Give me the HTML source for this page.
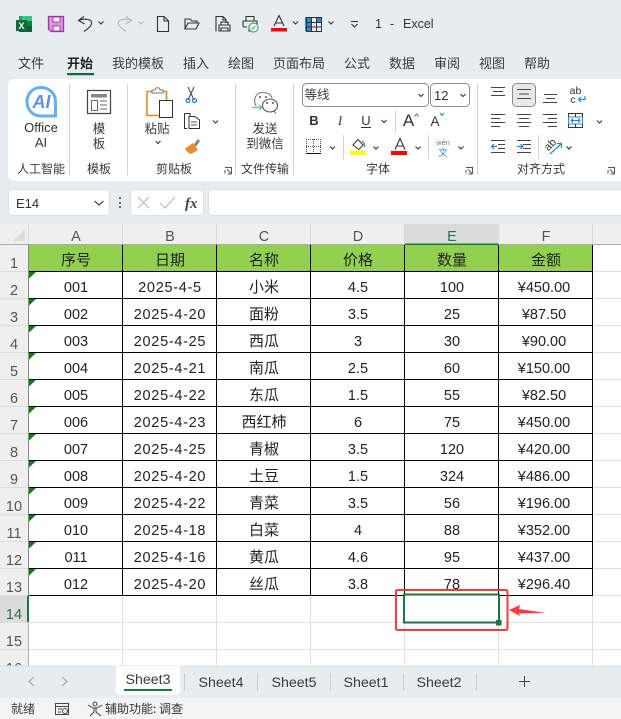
<!DOCTYPE html>
<html lang="zh"><head><meta charset="utf-8"><title>1 - Excel</title>
<style>
html,body{margin:0;padding:0;width:621px;height:719px;overflow:hidden;background:#fff}
svg{display:block;font-family:"Liberation Sans","Noto Sans CJK SC",sans-serif}
.c{font-size:14.5px;fill:#222;text-anchor:middle}
.d{font-size:14.5px;fill:#222;text-anchor:middle;letter-spacing:.7px}
.m{font-size:14.5px;fill:#222;text-anchor:middle}
.z{font-size:15px;fill:#222;text-anchor:middle;font-family:"Noto Sans CJK SC",sans-serif}
.h{font-size:14.5px;fill:#555;text-anchor:middle}
.t{font-size:13px;fill:#3a3a3a;text-anchor:middle;font-family:"Noto Sans CJK SC",sans-serif}
.l{font-size:12px;fill:#3a3a3a;text-anchor:middle;font-family:"Noto Sans CJK SC",sans-serif}
.s{font-size:14.200px;fill:#3a3a3a;text-anchor:middle}
.k{fill:none;stroke:#333;stroke-width:1.1}
.b{fill:none;stroke:#333;stroke-width:1}
</style></head><body>
<svg width="621" height="719" viewBox="0 0 621 719" xmlns="http://www.w3.org/2000/svg">
<rect width="621" height="224" fill="#e6ecef"/>
<!-- quick access -->
<rect x="19" y="16" width="13" height="16" fill="#21a366"/><rect x="22" y="16" width="10" height="5" fill="#33c481"/><rect x="25" y="21" width="7" height="5" fill="#107c41"/><rect x="19" y="26" width="13" height="6" fill="#185c37"/>
<rect x="16" y="20" width="11" height="11" fill="#0e6b3a"/><text x="21.500" y="29" font-size="9" font-weight="bold" fill="#fff" text-anchor="middle">X</text>
<path d="M48.500 16.500H63.500V31.500H51L48.500 29Z" fill="#d89ad8" stroke="#a333a3" stroke-width="1.300"/><rect x="53" y="17" width="7" height="5" fill="#fff" stroke="#a333a3"/><rect x="53" y="26" width="7" height="5" fill="#fff" stroke="#a333a3"/>
<path class="k" d="M84 16.500L78.500 20.500L84.500 24M78.500 20.500C83 18.500 90 18.500 91.500 22C92.500 25.500 88 28.500 84 31.500"/>
<path class="k" d="M98.500 21.500L101 24L103.500 21.500"/>
<path d="M126 16.500L131.500 20.500L125.500 24M131.500 20.500C127 18.500 120 18.500 118.500 22C117.500 25.500 122 28.500 126 31.500" fill="none" stroke="#b5b8ba" stroke-width="1.100"/>
<path d="M138.500 21.500L141 24L143.500 21.500" fill="none" stroke="#b5b8ba" stroke-width="1.100"/>
<path class="k" d="M157.500 16.500H164L168.500 21V31.500H157.500ZM164 16.500V21H168.500"/>
<path class="k" d="M185 29V19H190L192 21H197V23M185 29L188 23H199L196 29Z"/>
<path class="k" d="M216 31.500V16.500H223L226 19.500V23M223 16.500V20H226M219 31H230V25H219ZM221 25V22H228V25M221 28H228V31H221Z"/>
<path class="k" d="M246 21V16.500H254V21M243 27V21H257V24M247 27H243M249 26V31H251"/>
<circle cx="253.500" cy="27.500" r="4.500" fill="#fff" stroke="#3fae6a" stroke-width="1.200"/><path d="M251.500 27.500L253 29L255.500 26" fill="none" stroke="#3fae6a"/>
<path class="k" d="M274 26L279 15.500L284 26M275.500 23H282.500"/><rect x="271" y="28" width="16" height="3.500" fill="#f00"/>
<path class="k" d="M293 21.500L295.500 24L298 21.500"/>
<rect x="305" y="17" width="6" height="14" fill="#2b88d8"/><rect x="316" y="17" width="5" height="5" fill="#2b88d8"/>
<path d="M306.500 17.500H321.500V31.500H306.500ZM311.500 17.500V31.500M316.500 17.500V31.500M306.500 22.500H321.500M306.500 27H321.500" fill="none" stroke="#333"/>
<path class="k" d="M328.500 21.500L331 24L333.500 21.500"/>
<path class="k" d="M351 21.500H358M351.500 24L354.500 27L357.500 24"/>
<text x="375" y="28" font-size="12.500" fill="#333">1</text><text x="390" y="28" font-size="12.500" fill="#333">-</text><text x="403" y="28" font-size="12.500" fill="#333">Excel</text>
<!-- tabs -->
<text class="t" x="31" y="68">文件</text><text class="t" x="80" y="68" font-weight="bold" style="fill:#222">开始</text><text class="t" x="138" y="68">我的模板</text><text class="t" x="196" y="68">插入</text><text class="t" x="241" y="68">绘图</text><text class="t" x="299" y="68">页面布局</text><text class="t" x="357" y="68">公式</text><text class="t" x="402" y="68">数据</text><text class="t" x="447" y="68">审阅</text><text class="t" x="492" y="68">视图</text><text class="t" x="537" y="68">帮助</text>
<rect x="67" y="73" width="27" height="2.200" fill="#0f6b3c"/>
<!-- ribbon -->
<path d="M16 79H621V181H16Q8 181 8 173V87Q8 79 16 79Z" fill="#fff"/>
<path d="M69.500 84V175M127.500 84V175M235.500 84V175M293.500 84V175M477.500 84V175" stroke="#d4d4d4"/>
<!-- AI -->
<path d="M41 87.500C33 87.500 27 93.500 27 101.500C27 110 33 116 41 116H55.500V101.500C55.500 93.500 49 87.500 41 87.500Z" fill="#fff" stroke="#64b0f8" stroke-width="3"/>
<text x="41.500" y="108" font-size="18" font-weight="bold" font-style="italic" fill="#5f8fe8" text-anchor="middle">AI</text>
<text x="41" y="132" font-size="13" fill="#333" text-anchor="middle">Office</text><text x="41" y="147" font-size="13" fill="#333" text-anchor="middle">AI</text>
<text class="l" x="41" y="173">人工智能</text>
<!-- template -->
<rect x="87.500" y="90.500" width="23" height="23" fill="#fff" stroke="#444" stroke-width="1.200"/><rect x="91" y="94" width="16" height="3.500" fill="#888"/><rect x="91.500" y="100.500" width="6" height="10" fill="none" stroke="#666"/><path d="M100 101H107M100 105H107M100 109H107" stroke="#666"/>
<text class="l" x="99" y="133" style="font-size:12.500px">模</text><text class="l" x="99" y="148" style="font-size:12.500px">板</text><text class="l" x="99" y="173">模板</text>
<!-- clipboard -->
<path d="M147 91.500H166.500V115.500H147Z" fill="#fff" stroke="#e08a2e" stroke-width="1.600"/><path d="M152 93V90H155C155 87 160 87 160 90H163V93Z" fill="#fff" stroke="#777"/><rect x="159.500" y="100.500" width="13" height="17" fill="#fff" stroke="#333"/>
<text class="l" x="157" y="133" style="font-size:12.500px">粘贴</text><path class="k" d="M155.500 141L158 143.500L160.500 141"/>
<path d="M188 87L194 100M194 87L188 100" stroke="#444" fill="none"/><circle cx="188" cy="100.500" r="2" fill="none" stroke="#1f7fd0" stroke-width="1.200"/><circle cx="194.500" cy="100.500" r="2" fill="none" stroke="#1f7fd0" stroke-width="1.200"/>
<path class="b" d="M187 128.500H184.500V113.500H190V116.500M189 116.500H195L199.500 120V128.500H189Z"/><path d="M191 122H197M191 125H197" stroke="#555"/>
<path class="k" d="M213 120.500L215.500 123L218 120.500"/>
<path d="M186 148L193 143L198 150L191 154C188 153 186 151 185 148Z" fill="#ee8a2a"/><path d="M194 144L198 139L200 141L196 147Z" fill="#888"/>
<text class="l" x="174" y="173">剪贴板</text>
<path d="M225 167.500H231.500V174M225 173.500V170M231 174H227.500M227 169.500L231 173.500" fill="none" stroke="#555"/>
<!-- wechat -->
<path d="M256 106C253 100 255 92.500 263 92.500C268 92.500 271 95 272 98" fill="none" stroke="#777" stroke-width="1.100"/>
<ellipse cx="270" cy="105.500" rx="7.500" ry="6.500" fill="#fff" stroke="#555" stroke-width="1.100"/><path d="M274 111L276 113.500" stroke="#555"/>
<circle cx="260" cy="97" r="1" fill="#555"/><circle cx="266" cy="97" r="1" fill="#555"/><circle cx="267" cy="103" r="1" fill="#555"/><circle cx="273" cy="103" r="1" fill="#555"/>
<path d="M252 107.500H261.500M259 105L262 107.500L259 110" fill="none" stroke="#6fc08a" stroke-width="1.200"/>
<text class="l" x="265" y="133" style="font-size:12.500px">发送</text><text class="l" x="265" y="148" style="font-size:12.500px">到微信</text><text class="l" x="265" y="173">文件传输</text>
<!-- font -->
<rect x="302.500" y="83.500" width="126" height="23" rx="4" fill="#fff" stroke="#8a8a8a"/><text class="l" x="317" y="99" style="font-size:12.500px">等线</text><path class="k" d="M418.500 94L421 96.500L423.500 94"/>
<rect x="430.500" y="83.500" width="39" height="23" rx="4" fill="#fff" stroke="#8a8a8a"/><text x="434" y="100" font-size="13" fill="#333">12</text><path class="k" d="M460.500 94L463 96.500L465.500 94"/>
<text x="314" y="125" font-size="13" font-weight="bold" fill="#333" text-anchor="middle">B</text><text x="340" y="125" font-size="13" font-style="italic" fill="#333" text-anchor="middle" font-family="Liberation Serif">I</text><text x="366" y="125" font-size="13" fill="#333" text-anchor="middle">U</text><path d="M361 127.500H371" stroke="#333"/>
<path class="k" d="M381.500 120L384 122.500L386.500 120"/><path d="M395.500 110V133" stroke="#d4d4d4"/>
<text x="408.500" y="126" font-size="17" fill="#333" text-anchor="middle">A</text><path d="M414.500 116.500L416.500 114L418.500 116.500" fill="none" stroke="#2b88d8" stroke-width="1.100"/>
<text x="435" y="126" font-size="13.500" fill="#333" text-anchor="middle">A</text><path d="M440 113L442 115.500L444 113" fill="none" stroke="#2b88d8" stroke-width="1.100"/>
<path d="M306 139.500H321M306 146.500H321M306.500 139V153M313.500 139V153M320.500 139V153" stroke="#555" stroke-dasharray="1 1"/><path d="M306 153.500H321" stroke="#111"/>
<path class="k" d="M330 146.500L332.500 149L335 146.500"/><path d="M343.500 135V159" stroke="#d4d4d4"/>
<path class="b" d="M353 145L358 139.500L363 145L359 149.500Z"/><path d="M362 141Q365 143 364.500 147" stroke="#2b88d8" fill="none" stroke-width="1.300"/><rect x="350" y="151" width="16" height="4" fill="#ff0"/>
<path class="k" d="M373.500 146.500L376 149L378.500 146.500"/>
<path class="k" d="M395 149.500L400 138.500L405 149.500M396.500 146H403.500"/><rect x="391" y="151" width="16" height="4" fill="#f00"/>
<path class="k" d="M415.500 146.500L418 149L420.500 146.500"/><path d="M428.500 135V159" stroke="#d4d4d4"/>
<text x="443" y="145" font-size="7.500" fill="#777" text-anchor="middle">wén</text><text x="443" y="156" font-size="9.500" fill="#2b88d8" text-anchor="middle" font-family="Noto Sans CJK SC">文</text>
<path class="k" d="M458.500 146.500L461 149L463.500 146.500"/>
<text class="l" x="378" y="173">字体</text>
<path d="M466 167.500H472.500V174M466 173.500V170M472 174H468.500M468 169.500L472 173.500" fill="none" stroke="#555"/>
<!-- alignment -->
<rect x="512.500" y="83.500" width="23" height="23" rx="4" fill="#e8e8e8" stroke="#8a8a8a"/>
<path d="M491 87.500H505M493 91.500H503M491 95.500H505" stroke="#444"/>
<path d="M517 89.500H531M519 94H529M517 98.500H531" stroke="#444"/>
<path d="M544 94.500H557M546 98.500H555M543 102.500H557" stroke="#444"/>
<text x="575.500" y="94" font-size="10.500" fill="#333" text-anchor="middle">ab</text><text x="573" y="103" font-size="10.500" fill="#333" text-anchor="middle">c</text><path d="M585 96V99.500H578.500M581 97L578.500 99.500L581 102" fill="none" stroke="#2b88d8" stroke-width="1.200"/>
<path d="M491 114.500H505M491 118.500H500M491 122.500H505M491 126.500H500" stroke="#444"/>
<path d="M517 114.500H531M519 118.500H529M517 122.500H531M519 126.500H529" stroke="#444"/>
<path d="M543 114.500H557M548 118.500H557M543 122.500H557M548 126.500H557" stroke="#444"/>
<rect x="568.500" y="113.500" width="14" height="14" fill="#fff" stroke="#333"/><rect x="568.500" y="117" width="14" height="7" fill="#fff" stroke="#2b88d8"/><path d="M575.500 113.500V117M575.500 124V127.500" stroke="#333"/><path d="M571 120.500H580M573 118.500L571 120.500L573 122.500M578 118.500L580 120.500L578 122.500" fill="none" stroke="#1f7fd0" stroke-width="1.100"/>
<path class="k" d="M597 120.500L599.500 123L602 120.500"/>
<path d="M491 140.500H505M498 144.500H505M498 148.500H505M491 152.500H505" stroke="#444"/><path d="M497 146.500H491.500M494 144L491.500 146.500L494 149" fill="none" stroke="#1f7fd0" stroke-width="1.200"/>
<path d="M517 140.500H531M523 144.500H531M523 148.500H531M517 152.500H531" stroke="#444"/><path d="M517 146.500H523M520.500 144L523 146.500L520.500 149" fill="none" stroke="#1f7fd0" stroke-width="1.200"/>
<path d="M538.500 135V159" stroke="#d4d4d4"/>
<text x="550.500" y="148" font-size="11" fill="#333" text-anchor="middle" transform="rotate(-45 550.500 145)">ab</text><path d="M550 154L561 144M557 143.500H561.500V148" fill="none" stroke="#2b88d8" stroke-width="1.200"/>
<path class="k" d="M566.500 146.500L569 149L571.500 146.500"/>
<text class="l" x="541" y="173">对齐方式</text>
<path d="M608 167.500H614.500V174M608 173.500V170M614 174H610.500M610 169.500L614 173.500" fill="none" stroke="#555"/>
<!-- formula bar -->
<rect x="8.500" y="189.500" width="101" height="26" rx="4" fill="#fff" stroke="#dde1e3"/><text x="16" y="208" font-size="13" fill="#333">E14</text><path class="k" d="M94.500 201L99 205L103.500 201"/>
<circle cx="120" cy="198" r="1" fill="#444"/><circle cx="120" cy="203" r="1" fill="#444"/><circle cx="120" cy="207" r="1" fill="#444"/>
<rect x="130.500" y="189.500" width="73" height="26" rx="4" fill="#fff" stroke="#dde1e3"/>
<path d="M138 197L149 208M149 197L138 208" stroke="#bcbcbc" stroke-width="1.200"/><path d="M160 203L165 208L175 197" fill="none" stroke="#bcbcbc" stroke-width="1.200"/>
<text x="185" y="208" font-size="15" font-style="italic" font-weight="bold" fill="#444" font-family="Liberation Serif">fx</text>
<rect x="208.500" y="189.500" width="420" height="26" rx="4" fill="#fff" stroke="#dde1e3"/>
<!-- headers -->
<rect y="224" width="621" height="20" fill="#efefef"/><rect y="224" width="28" height="442" fill="#efefef"/>
<path d="M25 229V241H13Z" fill="#dcdcdc"/>
<rect x="405" y="224" width="93" height="20" fill="#dcdcdc"/>
<path d="M28.500 224V244M122.500 224V244M216.500 224V244M310.500 224V244M404.500 224V244M498.500 224V244M592.500 224V244" stroke="#d8d8d8"/>
<rect y="244" width="621" height="1" fill="#ababab"/><rect x="405" y="243.500" width="93" height="2" fill="#217346"/>
<path d="M0 271.500H28M0 298.500H28M0 325.500H28M0 352.500H28M0 379.500H28M0 406.500H28M0 433.500H28M0 460.500H28M0 487.500H28M0 514.500H28M0 541.500H28M0 568.500H28M0 595.500H28M0 622.500H28M0 649.500H28" stroke="#dcdcdc"/>
<rect y="596" width="28" height="26" fill="#dcdcdc"/>
<text class="h" x="76" y="241">A</text><text class="h" x="170" y="241">B</text><text class="h" x="264" y="241">C</text><text class="h" x="358" y="241">D</text><text class="h" x="452" y="241" style="fill:#217346">E</text><text class="h" x="546" y="241">F</text>
<text class="h" x="14" y="268">1</text><text class="h" x="14" y="295">2</text><text class="h" x="14" y="322">3</text><text class="h" x="14" y="349">4</text><text class="h" x="14" y="376">5</text><text class="h" x="14" y="403">6</text><text class="h" x="14" y="430">7</text><text class="h" x="14" y="457">8</text><text class="h" x="14" y="484">9</text><text class="h" x="14" y="511">10</text><text class="h" x="14" y="538">11</text><text class="h" x="14" y="565">12</text><text class="h" x="14" y="592">13</text><text class="h" x="14" y="619" style="fill:#217346">14</text><text class="h" x="14" y="646">15</text><text class="h" x="14" y="673">16</text>
<!-- grid -->
<path d="M592 271.500H621M592 298.500H621M592 325.500H621M592 352.500H621M592 379.500H621M592 406.500H621M592 433.500H621M592 460.500H621M592 487.500H621M592 514.500H621M592 541.500H621M592 568.500H621M592 595.500H621M29 622.500H621M29 649.500H621M122.500 596V666M216.500 596V666M310.500 596V666M404.500 596V666M498.500 596V666M592.500 596V666" stroke="#e0e0e0"/>
<rect x="29" y="245" width="564" height="26" fill="#92d050"/>
<path d="M28.500 245V666" stroke="#ababab"/>
<path d="M29 271.500H593M29 298.500H593M29 325.500H593M29 352.500H593M29 379.500H593M29 406.500H593M29 433.500H593M29 460.500H593M29 487.500H593M29 514.500H593M29 541.500H593M29 568.500H593M29 595.500H593M122.500 245V596M216.500 245V596M310.500 245V596M404.500 245V596M498.500 245V596M592.500 245V596" stroke="#000"/>
<path d="M28.500 245V596" stroke="#888"/>
<rect x="27" y="596" width="2" height="26" fill="#217346"/>
<!-- triangles -->
<path fill="#107c10" d="M29 272h7l-7 6.500zM29 299h7l-7 6.500zM29 326h7l-7 6.500zM29 353h7l-7 6.500zM29 380h7l-7 6.500zM29 407h7l-7 6.500zM29 434h7l-7 6.500zM29 461h7l-7 6.500zM29 488h7l-7 6.500zM29 515h7l-7 6.500zM29 542h7l-7 6.500zM29 569h7l-7 6.500z"/>
<!-- data -->
<text class="z" x="76" y="265">序号</text><text class="z" x="170" y="265">日期</text><text class="z" x="264" y="265">名称</text><text class="z" x="358" y="265">价格</text><text class="z" x="452" y="265">数量</text><text class="z" x="546" y="265">金额</text>
<text class="c" x="76" y="292">001</text><text class="d" x="170" y="292">2025-4-5</text><text class="z" x="264" y="292">小米</text><text class="c" x="358" y="292">4.5</text><text class="c" x="452" y="292">100</text><text class="m" x="544" y="292">¥450.00</text>
<text class="c" x="76" y="319">002</text><text class="d" x="170" y="319">2025-4-20</text><text class="z" x="264" y="319">面粉</text><text class="c" x="358" y="319">3.5</text><text class="c" x="452" y="319">25</text><text class="m" x="544" y="319">¥87.50</text>
<text class="c" x="76" y="346">003</text><text class="d" x="170" y="346">2025-4-25</text><text class="z" x="264" y="346">西瓜</text><text class="c" x="358" y="346">3</text><text class="c" x="452" y="346">30</text><text class="m" x="544" y="346">¥90.00</text>
<text class="c" x="76" y="373">004</text><text class="d" x="170" y="373">2025-4-21</text><text class="z" x="264" y="373">南瓜</text><text class="c" x="358" y="373">2.5</text><text class="c" x="452" y="373">60</text><text class="m" x="544" y="373">¥150.00</text>
<text class="c" x="76" y="400">005</text><text class="d" x="170" y="400">2025-4-22</text><text class="z" x="264" y="400">东瓜</text><text class="c" x="358" y="400">1.5</text><text class="c" x="452" y="400">55</text><text class="m" x="544" y="400">¥82.50</text>
<text class="c" x="76" y="427">006</text><text class="d" x="170" y="427">2025-4-23</text><text class="z" x="264" y="427">西红柿</text><text class="c" x="358" y="427">6</text><text class="c" x="452" y="427">75</text><text class="m" x="544" y="427">¥450.00</text>
<text class="c" x="76" y="454">007</text><text class="d" x="170" y="454">2025-4-25</text><text class="z" x="264" y="454">青椒</text><text class="c" x="358" y="454">3.5</text><text class="c" x="452" y="454">120</text><text class="m" x="544" y="454">¥420.00</text>
<text class="c" x="76" y="481">008</text><text class="d" x="170" y="481">2025-4-20</text><text class="z" x="264" y="481">土豆</text><text class="c" x="358" y="481">1.5</text><text class="c" x="452" y="481">324</text><text class="m" x="544" y="481">¥486.00</text>
<text class="c" x="76" y="508">009</text><text class="d" x="170" y="508">2025-4-22</text><text class="z" x="264" y="508">青菜</text><text class="c" x="358" y="508">3.5</text><text class="c" x="452" y="508">56</text><text class="m" x="544" y="508">¥196.00</text>
<text class="c" x="76" y="535">010</text><text class="d" x="170" y="535">2025-4-18</text><text class="z" x="264" y="535">白菜</text><text class="c" x="358" y="535">4</text><text class="c" x="452" y="535">88</text><text class="m" x="544" y="535">¥352.00</text>
<text class="c" x="76" y="562">011</text><text class="d" x="170" y="562">2025-4-16</text><text class="z" x="264" y="562">黄瓜</text><text class="c" x="358" y="562">4.6</text><text class="c" x="452" y="562">95</text><text class="m" x="544" y="562">¥437.00</text>
<text class="c" x="76" y="589">012</text><text class="d" x="170" y="589">2025-4-20</text><text class="z" x="264" y="589">丝瓜</text><text class="c" x="358" y="589">3.8</text><text class="c" x="452" y="589">78</text><text class="m" x="544" y="589">¥296.40</text>
<!-- selection -->
<rect x="404" y="594.500" width="95" height="28" fill="#fff" stroke="#217346" stroke-width="2"/><rect x="496" y="620" width="5.500" height="5.500" fill="#217346"/>
<rect x="396" y="590" width="111.500" height="40" rx="1.500" fill="none" stroke="#f53c3c" stroke-width="2"/>
<path d="M509 610L520 605L519 609L546 613L519 613.500L520 616Z" fill="#f53c3c"/>
<!-- sheet tabs -->
<rect y="666" width="621" height="32" fill="#e6ecef"/><rect y="665.500" width="621" height="1" fill="#dcdfe1"/>
<path d="M34 677L29 681.500L34 686" fill="none" stroke="#a0a0a0" stroke-width="1.100"/><path d="M62 677L67 681.500L62 686" fill="none" stroke="#a0a0a0" stroke-width="1.100"/>
<path d="M116 666H180V691Q180 695 176 695H120Q116 695 116 691Z" fill="#fff"/>
<text class="s" x="148" y="684">Sheet3</text><rect x="124" y="689" width="48" height="2" fill="#107c41"/>
<text class="s" x="221" y="687">Sheet4</text><text class="s" x="294" y="687">Sheet5</text><text class="s" x="366" y="687">Sheet1</text><text class="s" x="439" y="687">Sheet2</text>
<path d="M184.500 673V691M257.500 673V691M330.500 673V691M403.500 673V691M476.500 673V691" stroke="#c9cdd0"/>
<path d="M519 681.500H530M524.500 676V687" stroke="#444"/>
<!-- status -->
<rect y="698" width="621" height="21" fill="#f3f3f3"/>
<text class="l" x="23" y="713">就绪</text>
<rect x="55.500" y="703.500" width="13" height="11" fill="none" stroke="#444"/><path d="M55.500 706.500H68.500M58 709H62M58 712H61" stroke="#444"/><circle cx="65" cy="711" r="2.500" fill="#f3f3f3" stroke="#444"/>
<circle cx="95" cy="704" r="2" fill="none" stroke="#444"/><path d="M88 705L93 708H97L102 705M94 708V712L90 716M96 708V712L101 716" fill="none" stroke="#444"/>
<text x="105" y="713" font-size="12" fill="#333" style="font-family:'Noto Sans CJK SC',sans-serif">辅助功能: 调查</text>
</svg>
</body></html>
